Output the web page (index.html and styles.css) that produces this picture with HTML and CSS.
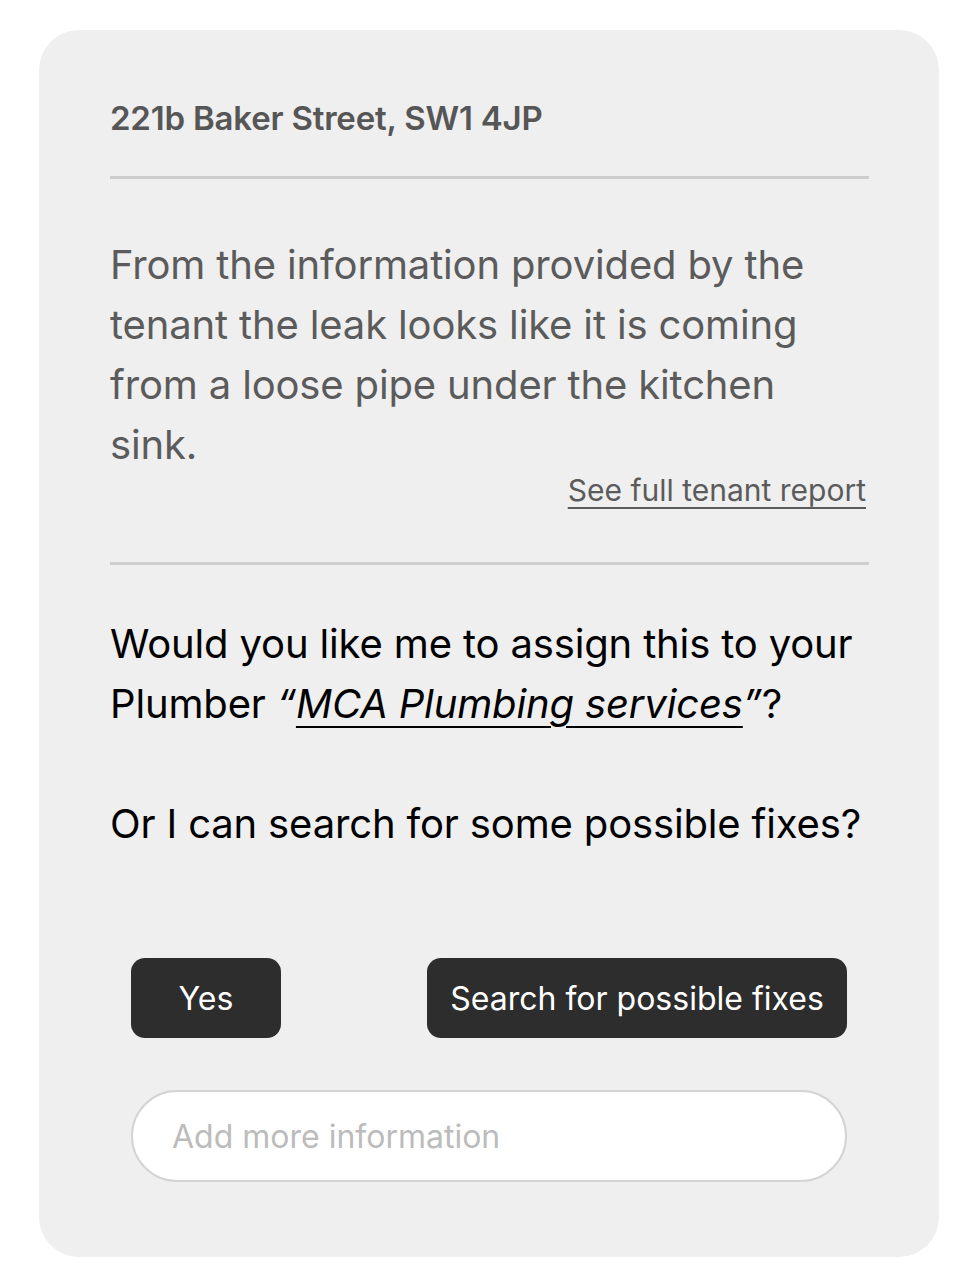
FILE: index.html
```html
<!DOCTYPE html>
<html lang="en">
<head>
<meta charset="utf-8">
<title>Report</title>
<link rel="stylesheet" href="styles.css">
</head>
<body>
<div class="page">
  <section class="card">
    <h1 class="address">221b Baker Street, SW1 4JP</h1>
    <hr class="divider divider-top">
    <p class="summary">From the information provided by the tenant the leak looks like it is coming from a loose pipe under the kitchen sink.</p>
    <div class="report-link-row"><a class="report-link" href="#">See full tenant report</a></div>
    <hr class="divider divider-mid">
    <div class="question">
      <p>Would you like me to assign this to your Plumber <i>“<u>MCA Plumbing services</u>”</i>?</p>
      <p>Or I can search for some possible fixes?</p>
    </div>
    <div class="actions">
      <button class="btn btn-yes">Yes</button>
      <button class="btn btn-search">Search for possible fixes</button>
    </div>
    <input class="more-info" type="text" placeholder="Add more information">
  </section>
</div>
</body>
</html>
```

FILE: styles.css
```css
* { box-sizing: border-box; }

body {
  margin: 0;
  background: #ffffff;
  font-family: Inter, "Noto Sans", "Liberation Sans", sans-serif;
}

.page {
  padding: 30px 0 30px 39px;
}

.card {
  width: 900px;
  background: #efefef;
  border-radius: 40px;
  padding: 70px 70px 75px 71px;
}

.address {
  margin: 0;
  font-size: 33px;
  line-height: 36px;
  font-weight: 600;
  color: #565656;
  letter-spacing: -0.2px;
}

.divider {
  border: 0;
  height: 3px;
  background: #cdcdcd;
  margin: 0;
}

.divider-top { margin-top: 40px; }

.summary {
  margin: 56px 0 0;
  font-size: 40px;
  line-height: 60px;
  color: #5b5b5b;
  letter-spacing: -0.15px;
}

.report-link-row {
  text-align: right;
  padding-right: 3px;
  line-height: 30px;
}

.report-link {
  font-size: 30px;
  color: #5b5b5b;
  text-decoration: underline;
  text-decoration-thickness: 2px;
  text-underline-offset: 6px;
}

.divider-mid { margin-top: 52px; }

.question {
  margin-top: 49px;
  font-size: 40px;
  line-height: 60px;
  color: #000000;
  letter-spacing: -0.15px;
}

.question p { margin: 0; }
.question p + p { margin-top: 60px; }

.question u {
  text-decoration-thickness: 2px;
  text-underline-offset: 8px;
}

.actions {
  display: flex;
  justify-content: space-between;
  margin-top: 104px;
  padding: 0 22px 0 21px;
}

.btn {
  height: 80px;
  border: 0;
  border-radius: 14px;
  background: #2d2d2d;
  color: #ffffff;
  font-family: inherit;
  font-size: 32px;
  padding: 0;
}

.btn-yes { width: 150px; }
.btn-search { width: 420px; }

.more-info {
  display: block;
  margin: 52px 22px 0 21px;
  width: 716px;
  height: 92px;
  border: 2px solid #d4d4d4;
  border-radius: 46px;
  background: #ffffff;
  padding: 0 39px;
  font-family: inherit;
  font-size: 32px;
  color: #333;
  outline: none;
}

.more-info::placeholder {
  color: #bcbcbc;
}
```
